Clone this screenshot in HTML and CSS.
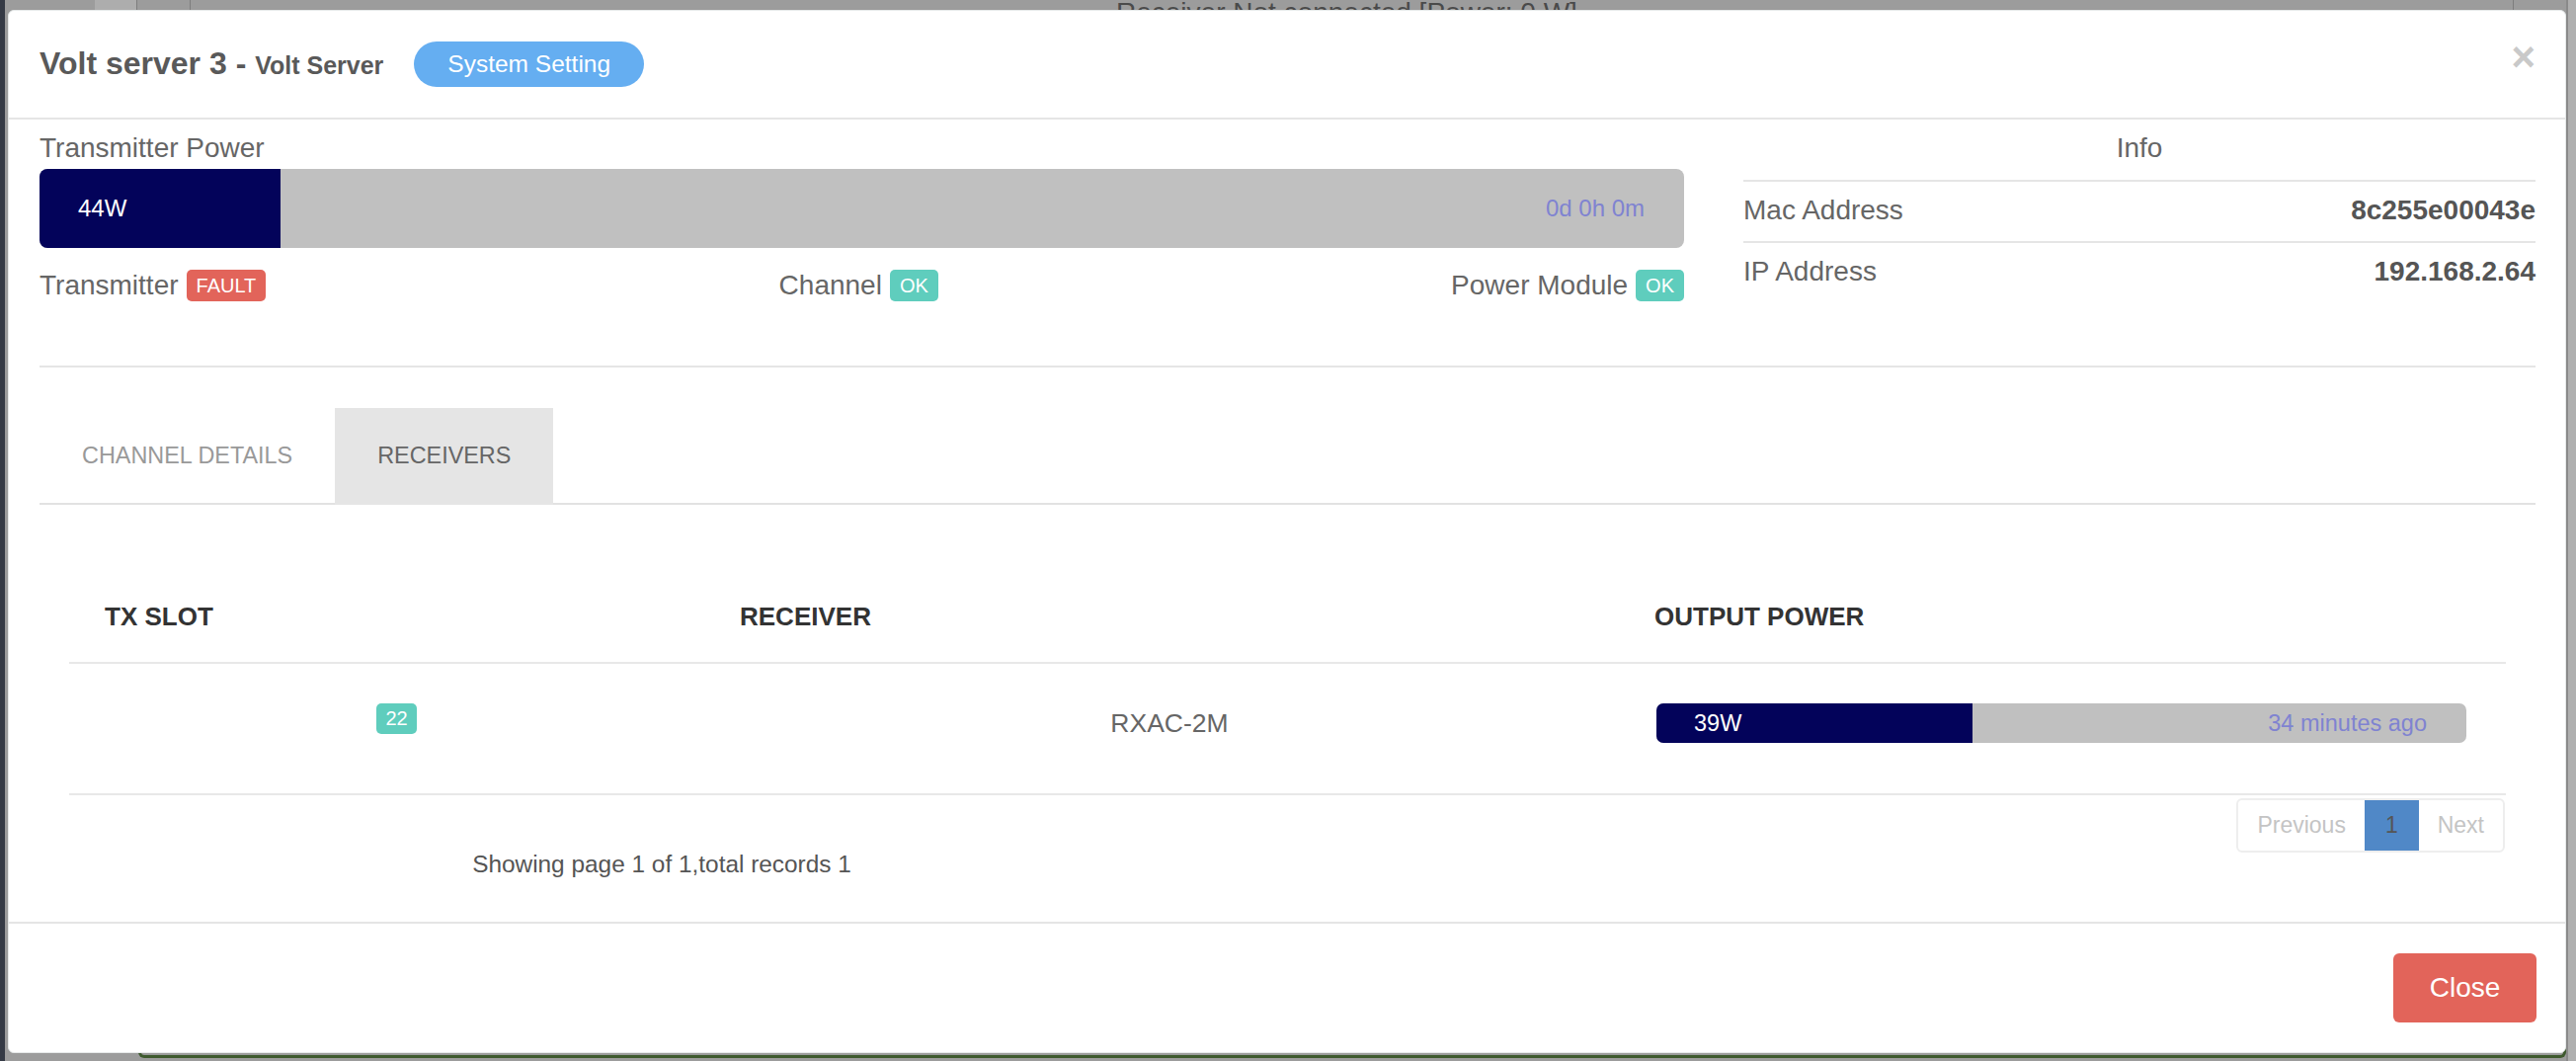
FILE: index.html
```html
<!DOCTYPE html>
<html lang="en">
<head>
<meta charset="utf-8">
<title>Volt server 3 - Volt Server</title>
<link rel="stylesheet" href="styles.css">
</head>
<body>
  <div class="page-behind" aria-hidden="true">
    <div class="behind-sidebar"></div>
    <div class="behind-cell"></div>
    <div class="behind-line line-a"></div>
    <div class="behind-line line-b"></div>
    <div class="behind-line line-c"></div>
    <div class="behind-text">Receiver Not connected [Power: 0 W]</div>
    <div class="behind-panel"></div>
    <div class="behind-right"></div>
  </div>

  <div class="modal">
    <div class="modal-header">
      <h4 class="modal-title">Volt server 3 - <small>Volt Server</small></h4>
      <button class="btn-pill">System Setting</button>
      <span class="close">×</span>
    </div>

    <div class="modal-body">
      <div class="top-row">
        <div class="col-main">
          <div class="label">Transmitter Power</div>
          <div class="progress progress-big">
            <div class="progress-bar" style="width:14.67%">44W</div>
            <span class="progress-time">0d 0h 0m</span>
          </div>
          <div class="status-row">
            <span class="status">Transmitter <span class="badge badge-red">FAULT</span></span>
            <span class="status">Channel <span class="badge badge-teal">OK</span></span>
            <span class="status">Power Module <span class="badge badge-teal">OK</span></span>
          </div>
        </div>
        <div class="col-info">
          <div class="info-title">Info</div>
          <table class="info-table">
            <tr><td>Mac Address</td><td class="val">8c255e00043e</td></tr>
            <tr><td>IP Address</td><td class="val">192.168.2.64</td></tr>
          </table>
        </div>
      </div>

      <hr class="divider">

      <ul class="tabs">
        <li class="tab">CHANNEL DETAILS</li>
        <li class="tab active">RECEIVERS</li>
      </ul>

      <div class="tab-content">
        <table class="rx-table">
          <colgroup>
            <col class="c1"><col class="c2"><col class="c3">
          </colgroup>
          <thead>
            <tr><th>TX SLOT</th><th>RECEIVER</th><th>OUTPUT POWER</th></tr>
          </thead>
          <tbody>
            <tr>
              <td class="center"><span class="badge badge-teal badge-slot">22</span></td>
              <td class="center rx-name">RXAC-2M</td>
              <td class="power-cell">
                <div class="progress progress-small">
                  <div class="progress-bar" style="width:39%">39W</div>
                  <span class="progress-time">34 minutes ago</span>
                </div>
              </td>
            </tr>
          </tbody>
        </table>
        <div class="table-foot">
          <div class="showing">Showing page 1 of 1,total records 1</div>
          <ul class="pagination">
            <li class="page disabled">Previous</li>
            <li class="page current">1</li>
            <li class="page disabled">Next</li>
          </ul>
        </div>
      </div>
    </div>

    <div class="modal-footer">
      <button class="btn-close">Close</button>
    </div>
  </div>
</body>
</html>
```

FILE: styles.css
```css
* { box-sizing: border-box; }

html, body {
  margin: 0;
  padding: 0;
}

body {
  width: 2608px;
  height: 1074px;
  overflow: hidden;
  position: relative;
  background: #9c9c9c;
  font-family: "Liberation Sans", Arial, Helvetica, sans-serif;
  color: #666;
}

/* ---------- dimmed page behind the modal ---------- */
.page-behind {
  position: absolute;
  inset: 0;
}
.behind-sidebar {
  position: absolute;
  left: 0; top: 0;
  width: 5px; height: 1074px;
  background: #353a45;
}
.behind-cell {
  position: absolute;
  left: 96px; top: 0;
  width: 42px; height: 10px;
  background: #adadad;
}
.behind-line {
  position: absolute;
  top: 0;
  width: 1px; height: 10px;
  background: #7d7d7d;
}
.line-a { left: 138px; }
.line-b { left: 192px; }
.line-c { left: 2544px; }
.behind-text {
  position: absolute;
  left: 1130px;
  top: -7px;
  font-size: 28px;
  line-height: 40px;
  color: #4a4a4a;
  white-space: nowrap;
}
.behind-panel {
  position: absolute;
  left: 140px; top: 900px;
  width: 2458px; height: 171px;
  border: 3px solid #3e5a2e;
  border-top: none;
  border-radius: 0 0 6px 6px;
}
.behind-right {
  position: absolute;
  left: 2598px; top: 0;
  width: 10px; height: 1074px;
  background: #afafaf;
  border-left: 2px solid #8a8a8a;
}

/* ---------- modal ---------- */
.modal {
  position: absolute;
  left: 8px;
  top: 10px;
  width: 2590px;
  height: 1056px;
  background: #fff;
  border: 1px solid #e6eaea;
  border-radius: 6px;
  display: flex;
  flex-direction: column;
}

.modal-header {
  height: 110px;
  flex: none;
  display: flex;
  align-items: center;
  padding: 0 30px 0 31px;
  border-bottom: 2px solid #e5e5e5;
}
.modal-title {
  margin: 0;
  font-size: 32px;
  font-weight: bold;
  color: #595959;
  line-height: 40px;
  white-space: nowrap;
}
.modal-title small {
  font-size: 25px;
  font-weight: bold;
  color: #595959;
}
.btn-pill {
  margin-left: 31px;
  height: 46px;
  padding: 0 34px;
  border: none;
  border-radius: 23px;
  background: #65aef1;
  color: #fff;
  font-family: inherit;
  font-size: 24.5px;
  line-height: 46px;
}
.close {
  margin-left: auto;
  margin-top: -14px;
  font-size: 42px;
  font-weight: bold;
  line-height: 1;
  color: #c9c9c9;
}

.modal-body {
  flex: 1;
  padding: 9px 30px 0 31px;
}

.top-row {
  display: flex;
  gap: 60px;
}
.col-main { width: 1665px; flex: none; }
.col-info { width: 802px; flex: none; }

.label {
  font-size: 28px;
  line-height: 40px;
  color: #666;
}

.progress {
  position: relative;
  display: flex;
  align-items: center;
  background: #c0c0c0;
  overflow: hidden;
}
.progress-bar {
  height: 100%;
  background: #03035a;
  color: #fff;
  white-space: nowrap;
  display: flex;
  align-items: center;
}
.progress-time {
  margin-left: auto;
  color: #7f83d1;
  white-space: nowrap;
}
.progress-big {
  margin-top: 1px;
  height: 80px;
  border-radius: 8px;
  font-size: 24px;
}
.progress-big .progress-bar { padding-left: 39px; }
.progress-big .progress-time { padding-right: 40px; }

.status-row {
  margin-top: 18px;
  display: flex;
  justify-content: space-between;
  align-items: center;
  font-size: 28px;
  line-height: 40px;
  color: #666;
}
.status { display: flex; align-items: center; gap: 8px; white-space: nowrap; }

.badge {
  display: inline-block;
  height: 32px;
  line-height: 32px;
  padding: 0 10px;
  border-radius: 5px;
  color: #fff;
  font-size: 20px;
}
.badge-red { background: #e2645a; }
.badge-teal { background: #5fcdbd; }

.info-title {
  font-size: 28px;
  line-height: 40px;
  text-align: center;
  color: #666;
}
.info-table {
  margin-top: 12px;
  width: 100%;
  border-collapse: collapse;
  font-size: 28px;
  line-height: 40px;
  color: #666;
}
.info-table td {
  border-top: 2px solid #e5e5e5;
  padding: 9px 0 11px;
}
.info-table .val {
  text-align: right;
  font-weight: bold;
  color: #555;
}

.divider {
  margin: 61px 0 0;
  border: none;
  border-top: 2px solid #e5e5e5;
  height: 0;
}

.tabs {
  list-style: none;
  margin: 41px 0 0;
  padding: 0;
  display: flex;
  border-bottom: 2px solid #e2e2e2;
  height: 98px;
}
.tab {
  height: 96px;
  line-height: 96px;
  padding: 0 43px;
  font-size: 23.4px;
  color: #999;
}
.tab.active {
  background: #e5e5e5;
  color: #666;
  height: 98px;
}

.tab-content {
  padding: 77px 30px 0;
}

.rx-table {
  width: 2467px;
  border-collapse: collapse;
  table-layout: fixed;
}
.rx-table .c1 { width: 643px; }
.rx-table .c2 { width: 926px; }
.rx-table .c3 { width: 898px; }
.rx-table th {
  text-align: left;
  font-size: 26px;
  font-weight: bold;
  color: #333;
  line-height: 40px;
  padding: 16px 16px 26px 36px;
  border-bottom: 2px solid #e8e8e8;
}
.rx-table td {
  vertical-align: top;
  padding: 40px 16px 51px 36px;
  line-height: 40px;
  border-bottom: 2px solid #e8e8e8;
  font-size: 26.5px;
  color: #666;
}
.rx-table td.center { text-align: center; }
.rx-table td.rx-name { padding-right: 20px; }
.badge-slot {
  height: 31px;
  line-height: 31px;
  padding: 0 9px;
  font-size: 20px;
  vertical-align: top;
}
.rx-table td.power-cell { padding-left: 38px; padding-right: 0; }

.progress-small {
  width: 820px;
  height: 40px;
  border-radius: 7px;
  font-size: 23.5px;
}
.progress-small .progress-bar { padding-left: 38px; }
.progress-small .progress-time { padding-right: 40px; }

.table-foot {
  display: flex;
  align-items: flex-start;
  width: 2467px;
}
.showing {
  width: 1200px;
  padding-top: 50px;
  text-align: center;
  font-size: 24.4px;
  line-height: 40px;
  color: #555;
}
.pagination {
  list-style: none;
  margin: 3px 1px 0 auto;
  padding: 0;
  display: flex;
  height: 55px;
  border: 2px solid #eeeeee;
  border-radius: 6px;
  overflow: hidden;
}
.page {
  height: 51px;
  line-height: 51px;
  font-size: 23px;
  padding: 0 19px;
}
.page.disabled { color: #c4c4c4; }
.page.current {
  background: #5088c7;
  color: #555;
  padding: 0 21px;
}

.modal-footer {
  flex: none;
  height: 132px;
  border-top: 2px solid #e5e5e5;
  display: flex;
  align-items: center;
  justify-content: flex-end;
  padding: 0 29px 0 31px;
}
.btn-close {
  width: 145px;
  height: 70px;
  border: none;
  border-radius: 6px;
  background: #e2645a;
  color: #fff;
  font-family: inherit;
  font-size: 28px;
}
```
